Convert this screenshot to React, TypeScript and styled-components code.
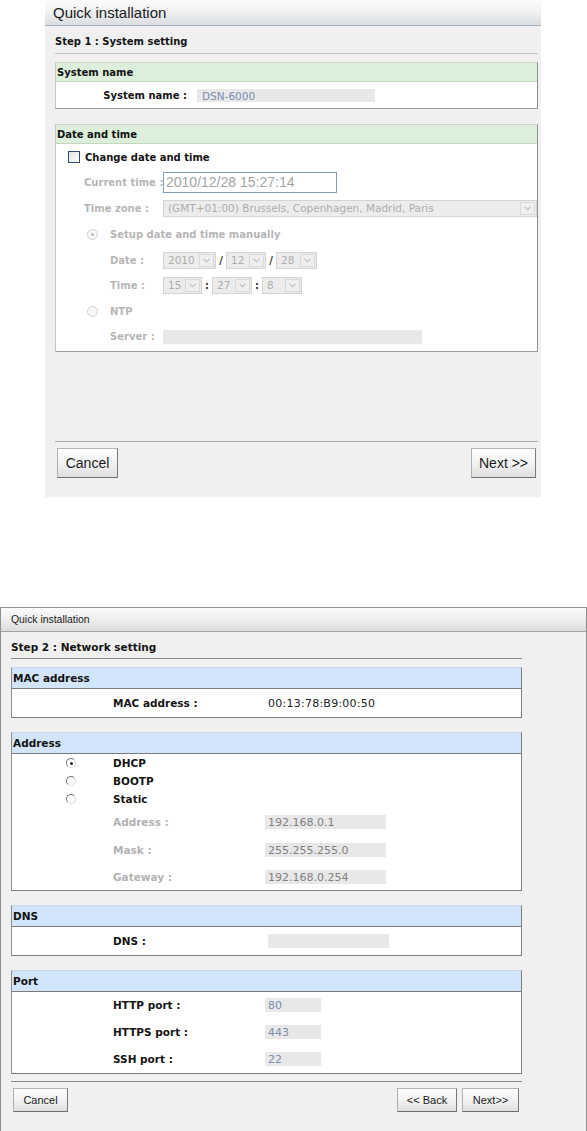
import React from 'react';
import styled, { createGlobalStyle, css } from 'styled-components';

type V = 'green' | 'blue';

const GlobalStyle = createGlobalStyle`
  *, *::before, *::after { box-sizing: border-box; }
  html, body { margin: 0; padding: 0; background: #ffffff; overflow: hidden; }
  body { font-family: "DejaVu Sans", Verdana, sans-serif; }
`;

const Page = styled.main`
  display: flex;
  flex-direction: column;
  align-items: flex-start;
  width: 587px;
  height: 1131px;
  overflow: hidden;
`;

const Dialog = styled.section<{ $v: V }>`
  display: flex;
  flex-direction: column;
  flex-shrink: 0;
  background: #f0f0f0;
  ${({ $v }) =>
    $v === 'green'
      ? css`
          margin-left: 45px;
          width: 496px;
          height: 497px;
        `
      : css`
          margin-top: 110px;
          width: 587px;
          height: 524px;
          border: 1px solid #8f8f8f;
          border-bottom: none;
        `}
`;

const TitleBar = styled.header<{ $v: V }>`
  display: flex;
  align-items: center;
  flex-shrink: 0;
  font-family: "Liberation Sans", Arial, sans-serif;
  color: #1a1a1a;
  ${({ $v }) =>
    $v === 'green'
      ? css`
          height: 26px;
          padding-left: 8px;
          font-size: 15px;
          background: linear-gradient(#fbfbfb, #f1f2f3 45%, #dadde0);
          border-bottom: 1px solid #a7b1bc;
        `
      : css`
          height: 24px;
          padding-left: 10px;
          font-size: 10.4px;
          background: linear-gradient(#fbfbfb, #f0f0f0 45%, #dcdcdc);
          border-bottom: 1px solid #a2a2a2;
        `}
`;

const Body = styled.div<{ $v: V }>`
  flex: 1;
  display: flex;
  flex-direction: column;
  padding: ${({ $v }) => ($v === 'green' ? '0 3px 0 10px' : '0 64px 0 10px')};
`;

const StepTitle = styled.h2<{ $v: V }>`
  margin: 0;
  font-weight: bold;
  line-height: 14px;
  color: #141414;
  white-space: nowrap;
  ${({ $v }) =>
    $v === 'green'
      ? css`
          font-size: 10px;
          padding: 9px 0 4px;
          border-bottom: 1px solid #c4c4bc;
        `
      : css`
          font-size: 10.5px;
          padding: 8px 0 4px;
          border-bottom: 1px solid #8a8a8a;
        `}
`;

const Fieldset = styled.section<{ $v: V; $mt: number }>`
  display: flex;
  flex-direction: column;
  margin-top: ${({ $mt }) => $mt}px;
  background: #ffffff;
  border: 1px solid;
  ${({ $v }) =>
    $v === 'green'
      ? css`
          border-color: #d2d2cc #8f8f8f #9c9c9c #c6c6c6;
        `
      : css`
          border-color: #c9d7e6 #808080 #7d7d7d #8e8e8e;
        `}
`;

const Legend = styled.h3<{ $v: V }>`
  margin: 0;
  display: flex;
  align-items: center;
  padding-left: 1px;
  font-weight: bold;
  color: #121212;
  white-space: nowrap;
  ${({ $v }) =>
    $v === 'green'
      ? css`
          height: 19px;
          font-size: 10px;
          background: #dcefda;
          border-bottom: 1px solid #c2d6c0;
        `
      : css`
          height: 21px;
          font-size: 10.5px;
          background: #d1e4f9;
          border-bottom: 1px solid #7b7b7b;
        `}
`;

const Content = styled.div<{ $pb?: number }>`
  display: flex;
  flex-direction: column;
  padding-bottom: ${({ $pb }) => $pb ?? 0}px;
`;

const Row = styled.div<{ $h: number; $indent: number }>`
  display: flex;
  align-items: center;
  height: ${({ $h }) => $h}px;
  padding-left: ${({ $indent }) => $indent}px;
`;

const Label = styled.span<{ $v: V; $w?: number; $ml?: number; $muted?: boolean; $right?: boolean }>`
  flex-shrink: 0;
  width: ${({ $w }) => ($w ? `${$w}px` : 'auto')};
  margin-left: ${({ $ml }) => $ml ?? 0}px;
  text-align: ${({ $right }) => ($right ? 'right' : 'left')};
  font-weight: bold;
  font-size: ${({ $v }) => ($v === 'green' ? '10px' : '10.5px')};
  color: ${({ $muted, $v }) => ($muted ? ($v === 'green' ? '#b6b6b6' : '#b2b2b2') : '#151515')};
  white-space: nowrap;
`;

const Value = styled.span`
  padding-left: 3px;
  font-size: 11px;
  letter-spacing: 0.25px;
  color: #222222;
  white-space: nowrap;
`;

const Field = styled.div<{ $w: number; $h: number; $ml?: number; $tone?: 'blue' | 'gray'; $size?: number; $pl?: number }>`
  flex-shrink: 0;
  width: ${({ $w }) => $w}px;
  height: ${({ $h }) => $h}px;
  margin-left: ${({ $ml }) => $ml ?? 0}px;
  padding-left: ${({ $pl }) => $pl ?? 3}px;
  background: #e8e8e8;
  font-size: ${({ $size }) => $size ?? 11}px;
  line-height: ${({ $h }) => $h + 1}px;
  color: ${({ $tone }) => ($tone === 'blue' ? '#7a8db0' : '#808080')};
  white-space: nowrap;
  overflow: hidden;
`;

const TextInput = styled.div`
  flex-shrink: 0;
  width: 174px;
  height: 21px;
  padding-left: 2px;
  border: 1px solid #7f9bb7;
  background: #ffffff;
  font-family: "Liberation Sans", Arial, sans-serif;
  font-size: 14px;
  line-height: 19px;
  color: #a4a4a4;
  white-space: nowrap;
  overflow: hidden;
`;

const SelectBox = styled.div<{ $w: number }>`
  flex-shrink: 0;
  display: flex;
  align-items: stretch;
  width: ${({ $w }) => $w}px;
  height: 17px;
  border: 1px solid #d4d4d0;
  background: #ececec;
  color: #acacac;
  font-size: 10.5px;
  white-space: nowrap;
  overflow: hidden;
`;

const SelectText = styled.span`
  flex: 1;
  padding-left: 4px;
  line-height: 15px;
  overflow: hidden;
`;

const SelectArrow = styled.span`
  width: 15px;
  margin: 1px;
  display: flex;
  align-items: center;
  justify-content: center;
  border: 1px solid #dadad6;
  background: #efefef;
`;

const Sep = styled.span`
  width: 10px;
  flex-shrink: 0;
  text-align: center;
  font-size: 10px;
  font-weight: bold;
  color: #333333;
`;

const Checkbox = styled.span`
  flex-shrink: 0;
  width: 12px;
  height: 12px;
  border: 1px solid #2e4c6c;
  background: linear-gradient(135deg, #e2e2de, #ffffff);
`;

const Radio = styled.span<{ $v: V; $checked?: boolean }>`
  flex-shrink: 0;
  display: flex;
  align-items: center;
  justify-content: center;
  border-radius: 50%;
  ${({ $v }) =>
    $v === 'green'
      ? css`
          width: 11px;
          height: 11px;
          border: 1px solid #d0d0d0;
          background: #f7f7f7;
        `
      : css`
          width: 10px;
          height: 10px;
          border: 1px solid;
          border-color: #767676 #d6d6d6 #dcdcdc #767676;
          background: #ffffff;
        `}
  &::after {
    content: '';
    display: ${({ $checked }) => ($checked ? 'block' : 'none')};
    width: 3px;
    height: 3px;
    border-radius: 50%;
    background: ${({ $v }) => ($v === 'green' ? '#bdbdbd' : '#2a2a2a')};
  }
`;

const Footer = styled.footer<{ $v: V }>`
  display: flex;
  justify-content: space-between;
  align-items: flex-start;
  ${({ $v }) =>
    $v === 'green'
      ? css`
          margin-top: auto;
          padding: 6px 2px 19px;
          border-top: 1px solid #aeaea8;
        `
      : css`
          margin-top: 7px;
          padding: 6px 3px 0 2px;
          border-top: 1px solid #8a8a8a;
        `}
`;

const ButtonGroup = styled.div`
  display: flex;
  gap: 5px;
`;

const Button = styled.button<{ $v: V; $w: number }>`
  width: ${({ $w }) => $w}px;
  padding: 0;
  font-family: "Liberation Sans", Arial, sans-serif;
  color: #1c1c1c;
  border: 1px solid;
  border-color: #b4b4b4 #7a7a7a #6e6e6e #b0b0b0;
  border-radius: 0;
  background: linear-gradient(#fdfdfd, #f2f2f2 50%, #dfdfdf);
  white-space: nowrap;
  ${({ $v }) =>
    $v === 'green'
      ? css`
          height: 30px;
          font-size: 14px;
        `
      : css`
          height: 24px;
          font-size: 11px;
        `}
`;

const Chevron: React.FC = () => (
  <svg width="7" height="5" viewBox="0 0 7 5" aria-hidden="true">
    <path d="M0.6 0.9 L3.5 3.8 L6.4 0.9" fill="none" stroke="#b9b9b9" strokeWidth="1.1" />
  </svg>
);

const Select: React.FC<{ w: number; children?: React.ReactNode }> = ({ w, children }) => (
  <SelectBox $w={w}>
    <SelectText>{children}</SelectText>
    <SelectArrow>
      <Chevron />
    </SelectArrow>
  </SelectBox>
);

const StepOne: React.FC = () => (
  <Dialog $v="green">
    <TitleBar $v="green">Quick installation</TitleBar>
    <Body $v="green">
      <StepTitle $v="green">Step 1 : System setting</StepTitle>
      <Fieldset $v="green" $mt={8}>
        <Legend $v="green">System name</Legend>
        <Content>
          <Row $h={26} $indent={0}>
            <Label $v="green" $w={131} $right>
              System name :
            </Label>
            <Field $w={178} $h={13} $ml={10} $tone="blue" $size={10.5} $pl={5}>
              DSN-6000
            </Field>
          </Row>
        </Content>
      </Fieldset>
      <Fieldset $v="green" $mt={15}>
        <Legend $v="green">Date and time</Legend>
        <Content $pb={3}>
          <Row $h={26} $indent={12}>
            <Checkbox />
            <Label $v="green" $ml={5}>
              Change date and time
            </Label>
          </Row>
          <Row $h={25} $indent={28}>
            <Label $v="green" $w={79} $muted>
              Current time :
            </Label>
            <TextInput>2010/12/28 15:27:14</TextInput>
          </Row>
          <Row $h={26} $indent={28}>
            <Label $v="green" $w={79} $muted>
              Time zone :
            </Label>
            <Select w={374}>(GMT+01:00) Brussels, Copenhagen, Madrid, Paris</Select>
          </Row>
          <Row $h={27} $indent={31}>
            <Radio $v="green" $checked />
            <Label $v="green" $ml={12} $muted>
              Setup date and time manually
            </Label>
          </Row>
          <Row $h={25} $indent={54}>
            <Label $v="green" $w={53} $muted>
              Date :
            </Label>
            <Select w={53}>2010</Select>
            <Sep>/</Sep>
            <Select w={40}>12</Select>
            <Sep>/</Sep>
            <Select w={41}>28</Select>
          </Row>
          <Row $h={25} $indent={54}>
            <Label $v="green" $w={53} $muted>
              Time :
            </Label>
            <Select w={39}>15</Select>
            <Sep>:</Sep>
            <Select w={40}>27</Select>
            <Sep>:</Sep>
            <Select w={40}>8</Select>
          </Row>
          <Row $h={27} $indent={31}>
            <Radio $v="green" />
            <Label $v="green" $ml={12} $muted>
              NTP
            </Label>
          </Row>
          <Row $h={23} $indent={54}>
            <Label $v="green" $w={53} $muted>
              Server :
            </Label>
            <Field $w={259} $h={14} />
          </Row>
        </Content>
      </Fieldset>
      <Footer $v="green">
        <Button $v="green" $w={61}>
          Cancel
        </Button>
        <Button $v="green" $w={65}>
          Next &gt;&gt;
        </Button>
      </Footer>
    </Body>
  </Dialog>
);

const addressModes = [
  { name: 'DHCP', checked: true },
  { name: 'BOOTP', checked: false },
  { name: 'Static', checked: false },
];

const staticFields = [
  { label: 'Address :', value: '192.168.0.1', h: 28 },
  { label: 'Mask :', value: '255.255.255.0', h: 27 },
  { label: 'Gateway :', value: '192.168.0.254', h: 27 },
];

const ports = [
  { label: 'HTTP port :', value: '80', h: 26 },
  { label: 'HTTPS port :', value: '443', h: 27 },
  { label: 'SSH port :', value: '22', h: 28 },
];

const StepTwo: React.FC = () => (
  <Dialog $v="blue">
    <TitleBar $v="blue">Quick installation</TitleBar>
    <Body $v="blue">
      <StepTitle $v="blue">Step 2 : Network setting</StepTitle>
      <Fieldset $v="blue" $mt={8}>
        <Legend $v="blue">MAC address</Legend>
        <Content>
          <Row $h={28} $indent={101}>
            <Label $v="blue" $w={152}>
              MAC address :
            </Label>
            <Value>00:13:78:B9:00:50</Value>
          </Row>
        </Content>
      </Fieldset>
      <Fieldset $v="blue" $mt={14}>
        <Legend $v="blue">Address</Legend>
        <Content>
          {addressModes.map((m) => (
            <Row key={m.name} $h={18} $indent={54}>
              <Radio $v="blue" $checked={m.checked} />
              <Label $v="blue" $ml={37}>
                {m.name}
              </Label>
            </Row>
          ))}
          {staticFields.map((f) => (
            <Row key={f.label} $h={f.h} $indent={101}>
              <Label $v="blue" $w={152} $muted>
                {f.label}
              </Label>
              <Field $w={121} $h={14}>
                {f.value}
              </Field>
            </Row>
          ))}
        </Content>
      </Fieldset>
      <Fieldset $v="blue" $mt={14}>
        <Legend $v="blue">DNS</Legend>
        <Content>
          <Row $h={28} $indent={101}>
            <Label $v="blue" $w={155}>
              DNS :
            </Label>
            <Field $w={121} $h={14} />
          </Row>
        </Content>
      </Fieldset>
      <Fieldset $v="blue" $mt={14}>
        <Legend $v="blue">Port</Legend>
        <Content>
          {ports.map((p) => (
            <Row key={p.label} $h={p.h} $indent={101}>
              <Label $v="blue" $w={152}>
                {p.label}
              </Label>
              <Field $w={56} $h={14} $tone="blue">
                {p.value}
              </Field>
            </Row>
          ))}
        </Content>
      </Fieldset>
      <Footer $v="blue">
        <Button $v="blue" $w={55}>
          Cancel
        </Button>
        <ButtonGroup>
          <Button $v="blue" $w={60}>
            &lt;&lt; Back
          </Button>
          <Button $v="blue" $w={57}>
            Next&gt;&gt;
          </Button>
        </ButtonGroup>
      </Footer>
    </Body>
  </Dialog>
);

export default function App() {
  return (
    <>
      <GlobalStyle />
      <Page>
        <StepOne />
        <StepTwo />
      </Page>
    </>
  );
}
